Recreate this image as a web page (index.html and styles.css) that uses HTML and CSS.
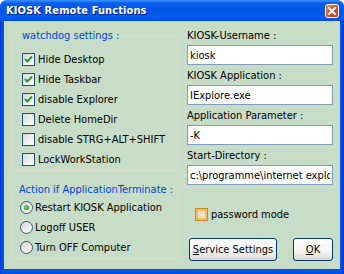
FILE: index.html
```html
<!DOCTYPE html>
<html lang="en">

<head>
    <meta charset="UTF-8">
    <meta name="viewport" content="width=device-width, initial-scale=1.0">
    <title>KIOSK Remote Functions</title>
    <link rel="stylesheet" href="styles.css">
</head>

<body>
    <div class="window">
        <div class="titlebar">
            <span class="caption">KIOSK Remote Functions</span>
            <span class="close">
                <svg width="12" height="12" viewBox="0 0 12 12">
                    <path d="M3 3 L9 9 M9 3 L3 9" stroke="#fff" stroke-width="2" stroke-linecap="square" fill="none" />
                </svg>
            </span>
        </div>
        <div class="client">
            <div class="left">
                <fieldset class="group watchdog">
                    <legend>watchdog settings :</legend>
                    <label class="check"><span class="box"><svg width="11" height="11" viewBox="0 0 11 11"><path d="M2 5 L4.3 7.5 L9 2.5" stroke="#21a121" stroke-width="2" fill="none" /></svg></span>Hide Desktop</label>
                    <label class="check"><span class="box"><svg width="11" height="11" viewBox="0 0 11 11"><path d="M2 5 L4.3 7.5 L9 2.5" stroke="#21a121" stroke-width="2" fill="none" /></svg></span>Hide Taskbar</label>
                    <label class="check"><span class="box"><svg width="11" height="11" viewBox="0 0 11 11"><path d="M2 5 L4.3 7.5 L9 2.5" stroke="#21a121" stroke-width="2" fill="none" /></svg></span>disable Explorer</label>
                    <label class="check"><span class="box"></span>Delete HomeDir</label>
                    <label class="check"><span class="box"></span>disable STRG+ALT+SHIFT</label>
                    <label class="check"><span class="box"></span>LockWorkStation</label>
                </fieldset>
                <fieldset class="group action">
                    <legend>Action if ApplicationTerminate :</legend>
                    <label class="radio"><span class="dot on"></span>Restart KIOSK Application</label>
                    <label class="radio"><span class="dot"></span>Logoff USER</label>
                    <label class="radio"><span class="dot"></span>Turn OFF Computer</label>
                </fieldset>
            </div>
            <div class="right">
                <div class="field">
                    <div class="lbl">KIOSK-Username :</div>
                    <input class="edit" type="text" value="kiosk">
                </div>
                <div class="field">
                    <div class="lbl">KIOSK Application :</div>
                    <input class="edit" type="text" value="IExplore.exe">
                </div>
                <div class="field">
                    <div class="lbl">Application Parameter :</div>
                    <input class="edit" type="text" value="-K">
                </div>
                <div class="field">
                    <div class="lbl">Start-Directory :</div>
                    <input class="edit" type="text" value="c:\programme\internet explorer\">
                </div>
                <label class="check pw"><span class="box hot"></span>password mode</label>
                <div class="buttons">
                    <button class="btn service"><u>S</u>ervice Settings</button>
                    <button class="btn ok"><u>O</u>K</button>
                </div>
            </div>
        </div>
    </div>
</body>

</html>
```

FILE: styles.css
```css
body {
    margin: 0;
    font-family: "DejaVu Sans Condensed", "DejaVu Sans", sans-serif;
    font-size: 11px;
    color: #000;
}

.window {
    width: 344px;
    height: 274px;
    display: flex;
    flex-direction: column;
    background: linear-gradient(to right, #0831d9 0, #0054e3 2px, #0054e3 341px, #0831d9 344px);
    border-radius: 7px 7px 0 0;
    overflow: hidden;
}

.titlebar {
    height: 21px;
    flex: none;
    display: flex;
    align-items: center;
    justify-content: space-between;
    padding: 0 5px 0 6px;
    background: linear-gradient(#3d95ff 0, #0a5eee 3px, #0055e6 50%, #005df2 85%, #004ada 100%);
    color: #fff;
}

.caption {
    font-family: "DejaVu Sans Condensed", "DejaVu Sans", sans-serif;
    font-weight: bold;
    font-size: 11px;
    letter-spacing: 0.1px;
    text-shadow: 1px 1px #0a1883;
}

.close {
    width: 14px;
    height: 14px;
    box-sizing: border-box;
    border: 1px solid #fff;
    border-radius: 3px;
    background: linear-gradient(135deg, #e9805c, #d9461c 60%, #c23b12);
    display: flex;
    align-items: center;
    justify-content: center;
    margin-top: 1px;
}

.client {
    flex: 1;
    margin: 0 4px 5px;
    background: #c8ddc8;
    display: flex;
    gap: 8px;
    padding: 8px 7px 0 8px;
}

.left {
    width: 168px;
    display: flex;
    flex-direction: column;
    gap: 12px;
}

.group {
    margin: 0;
    border: 1px solid #dadcc9;
    border-radius: 4px;
    padding: 7px 0 1px 9px;
    display: flex;
    flex-direction: column;
}

.group legend {
    padding: 0;
    line-height: 13px;
    color: #0046d5;
}

.action {
    padding: 1px 0 1px 7px;
}

.action legend {
    margin-left: -1px;
}

.check,
.radio {
    height: 20px;
    display: flex;
    align-items: center;
    white-space: nowrap;
}

.box {
    width: 13px;
    height: 13px;
    box-sizing: border-box;
    border: 1px solid #1c5180;
    background: linear-gradient(135deg, #dcdcd7, #fff);
    margin-right: 3px;
    display: flex;
    align-items: center;
    justify-content: center;
}

.box.hot {
    border-color: #c58a2b;
    box-shadow: inset 0 0 0 2px #f8bd4e;
    background: #e2e2dd;
}

.dot {
    width: 13px;
    height: 13px;
    box-sizing: border-box;
    border: 1px solid #2f5b84;
    border-radius: 50%;
    background: linear-gradient(135deg, #d4d4ce, #fff);
    margin-right: 2px;
    display: flex;
    align-items: center;
    justify-content: center;
}

.dot.on::after {
    content: "";
    width: 5px;
    height: 5px;
    border-radius: 50%;
    background: radial-gradient(circle at 40% 40%, #6ee56e, #21a121 70%);
}

.right {
    width: 146px;
    display: flex;
    flex-direction: column;
}

.field {
    display: flex;
    flex-direction: column;
    gap: 3px;
    margin-bottom: 4px;
}

.lbl {
    line-height: 13px;
    white-space: nowrap;
}

.edit {
    height: 20px;
    box-sizing: border-box;
    border: 1px solid #7f9db9;
    padding: 0 2px;
    margin: 0;
    font: inherit;
    background: #fff;
    color: #000;
    outline: none;
}

.pw {
    margin: 15px 0 0 8px;
}

.buttons {
    display: flex;
    gap: 16px;
    margin: 14px 0 0 2px;
}

.btn {
    height: 23px;
    box-sizing: border-box;
    border: 1px solid #003c74;
    border-radius: 3px;
    background: linear-gradient(#ffffff, #f4f3ee 60%, #e3e0d6 90%, #d6d0c5);
    font: inherit;
    color: #000;
    padding: 0;
}

.service {
    width: 88px;
}

.ok {
    width: 40px;
}
```
